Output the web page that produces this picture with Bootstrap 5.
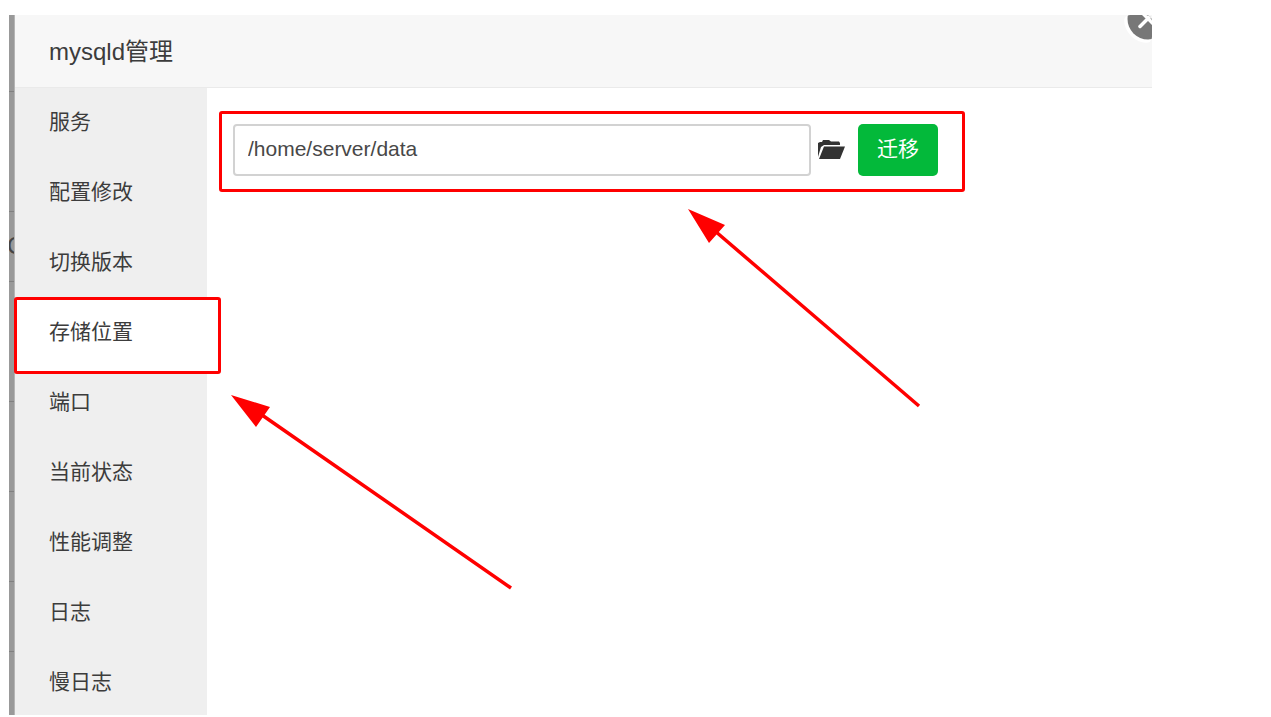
<!DOCTYPE html>
<html lang="zh-CN">
<head>
<meta charset="utf-8">
<meta name="viewport" content="width=device-width, initial-scale=1">
<title>mysqld管理</title>
<link href="https://cdn.jsdelivr.net/npm/bootstrap@5.3.0/dist/css/bootstrap.min.css" rel="stylesheet">
<style>
body { font-family: "Liberation Sans", "Noto Sans CJK SC", sans-serif; font-size: 21px; line-height: 30px; color: #3c3c3c; background: #fff; }
.stage { padding: 15px 119px 2px 9px; }
/* dimmed page showing behind the dialog */
.backdrop-strip { width: 6px; background: #999; border-right: 1px solid #b5b5b5; }
.backdrop-strip div { border-bottom: 1px solid #808080; }
.backdrop-strip .behind-text { color: #444; font-size: 24px; line-height: 68px; text-indent: -2px; }
.h-70 { height: 70px; } .h-77 { height: 77px; } .h-90 { height: 90px; } .h-120 { height: 120px; }
.dialog-head { height: 73px; padding: 2px 34px 0; background: #f7f7f7; border-bottom: 1px solid #eaeaea; }
.dialog-head h1 { font-size: 24px; line-height: 36px; }
.side-menu { width: 192px; background: #efefef; }
.side-menu .nav-link { height: 70px; padding: 19px 34px; color: #3c3c3c; }
.side-menu .nav-link.active { position: relative; z-index: 1; }
.side-menu .nav-link.active::before { content: ""; position: absolute; z-index: -1; top: -1px; right: -14px; bottom: -6px; left: -1px; background: #fff; }
.side-menu .nav-link.active::before, .path-form { border: 3px solid #f00; border-radius: 3px; }
.dialog-main { padding: 23px 12px; }
.path-form { max-width: 746px; padding: 10px 24px 13px 11px; }
.path-form .form-control { height: 52px; padding: 0 13px 2px; font-size: 21px; line-height: 30px; color: #484848; border: 2px solid #d2d2d2; border-radius: 4px; }
.path-form .btn { font-size: 21px; line-height: 30px; }
.path-form .btn-migrate, .path-form .btn-migrate:hover { height: 52px; width: 80px; padding: 0 0 2px; color: #fff; background: #03b93a; border-radius: 5px; }
.pick-dir { margin: 0 13px 0 7px; }
.close-clip { top: 0; right: 0; width: 28px; height: 28px; }
.arrows { top: 0; left: 0; pointer-events: none; z-index: 2; }
</style>
</head>
<body>
<div class="stage d-flex min-vh-100 position-relative">
  <div class="backdrop-strip flex-shrink-0 overflow-hidden" aria-hidden="true">
    <div class="h-77"></div>
    <div class="h-120"></div>
    <div class="h-70 behind-text">C</div>
    <div class="h-120"></div>
    <div class="h-90"></div>
    <div class="h-90"></div>
    <div class="h-70"></div>
  </div>
  <section class="flex-grow-1 d-flex flex-column position-relative">
    <header class="dialog-head d-flex align-items-center">
      <h1 class="m-0 fw-normal">mysqld管理</h1>
      <button type="button" class="close-clip btn p-0 border-0 position-absolute d-block overflow-hidden" aria-label="关闭">
        <svg class="d-block" width="28" height="28" viewBox="0 0 28 28">
          <circle cx="24" cy="4" r="24" fill="#fff"/>
          <circle cx="24" cy="4" r="20.5" fill="#777"/>
          <path d="M16 11.500L32-4.500M16-4.500L32 11.500" stroke="#fff" stroke-width="3.500" stroke-linecap="round"/>
        </svg>
      </button>
    </header>
    <div class="d-flex flex-grow-1">
      <nav class="side-menu nav flex-column flex-nowrap flex-shrink-0">
        <a class="nav-link" href="#">服务</a>
        <a class="nav-link" href="#">配置修改</a>
        <a class="nav-link" href="#">切换版本</a>
        <a class="nav-link active" aria-current="page" href="#">存储位置</a>
        <a class="nav-link" href="#">端口</a>
        <a class="nav-link" href="#">当前状态</a>
        <a class="nav-link" href="#">性能调整</a>
        <a class="nav-link" href="#">日志</a>
        <a class="nav-link pb-0 h-auto" href="#">慢日志</a>
      </nav>
      <main class="dialog-main flex-grow-1">
        <form class="path-form d-flex align-items-center">
          <label for="path" class="visually-hidden">存储位置</label>
          <input id="path" type="text" class="form-control flex-fill" value="/home/server/data">
          <button type="button" class="btn border-0 p-0 pick-dir flex-shrink-0" aria-label="选择目录">
            <svg class="d-block" width="27" height="20" viewBox="0 0 27 20" fill="#333">
              <path d="M0 17V3L2 2H4L5 0H11L13 1.500H21L22 3V5H6L3 7Z"/>
              <path d="M6 6.500H27L22 19H1Z"/>
            </svg>
          </button>
          <button type="button" class="btn btn-migrate border-0 flex-shrink-0">迁移</button>
        </form>
      </main>
    </div>
  </section>
  <svg class="arrows position-absolute" width="960" height="620" viewBox="0 0 960 620" fill="#f00" stroke="#f00" aria-hidden="true">
    <path d="M715 231L919 406M262 415L511 588" stroke-width="3.5"/>
    <path stroke="none" d="M688 209L725 225L709 243ZM231 395L270 407L256 427Z"/>
  </svg>
</div>
<script src="https://cdn.jsdelivr.net/npm/bootstrap@5.3.0/dist/js/bootstrap.bundle.min.js"></script>
</body>
</html>
